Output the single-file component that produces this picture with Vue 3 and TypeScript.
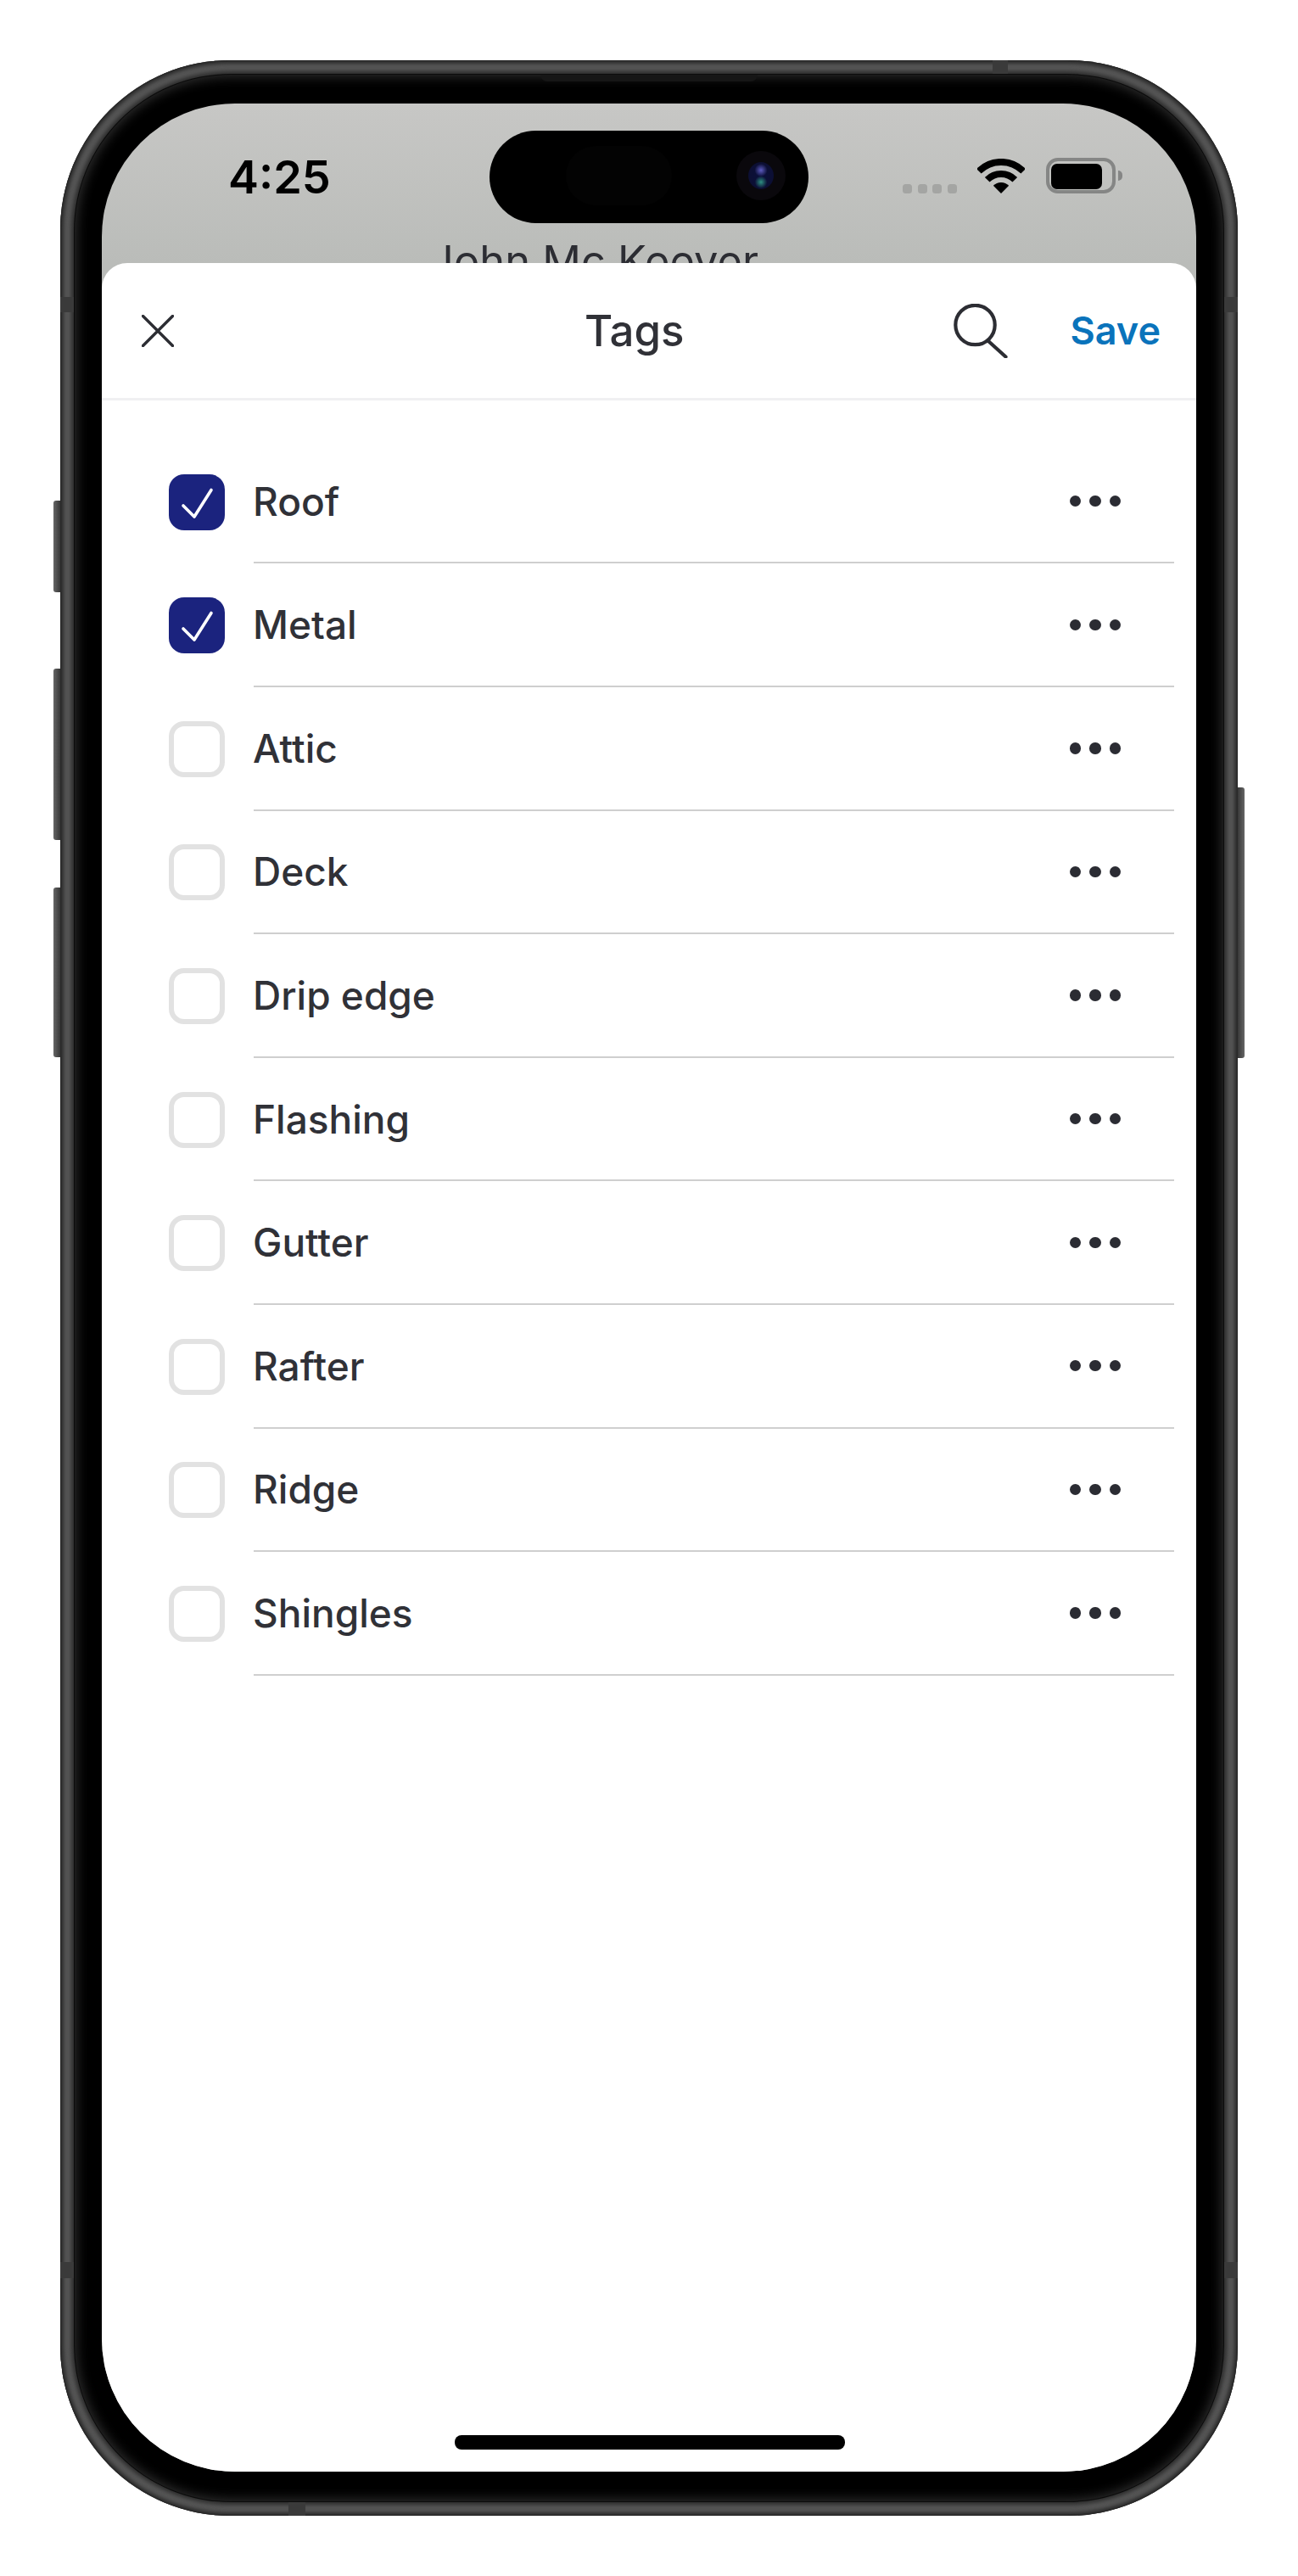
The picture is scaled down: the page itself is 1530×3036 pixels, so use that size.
<script setup lang="ts">
interface Tag { name: string; checked: boolean }
const tags: Tag[] = [
  { name: 'Roof', checked: true },
  { name: 'Metal', checked: true },
  { name: 'Attic', checked: false },
  { name: 'Deck', checked: false },
  { name: 'Drip edge', checked: false },
  { name: 'Flashing', checked: false },
  { name: 'Gutter', checked: false },
  { name: 'Rafter', checked: false },
  { name: 'Ridge', checked: false },
  { name: 'Shingles', checked: false },
]
</script>

<template>
  <div class="page">
    <div class="phone">
      <i class="btn btn-a"></i>
      <i class="btn btn-b"></i>
      <i class="btn btn-c"></i>
      <i class="btn btn-r"></i>
      <div class="bezel">
        <div class="screen">
          <div class="backdrop">
            <div class="status">
              <span class="time">4:25</span>
              <div class="island">
                <i class="sensor"></i>
                <i class="camera"><i class="lens"></i></i>
              </div>
              <div class="signal"><i></i><i></i><i></i><i></i></div>
              <svg class="wifi" width="56" height="41" viewBox="0 0 56 41">
                <path d="M1.8 14.8A37 37 0 0 1 54.2 14.8" fill="none" stroke="#000" stroke-width="8" />
                <path d="M11.7 24.7A23 23 0 0 1 44.3 24.7" fill="none" stroke="#000" stroke-width="8" />
                <path d="M18.8 31.8A13 13 0 0 1 37.2 31.8L28 41Z" fill="#000" />
              </svg>
              <div class="battery"><i></i></div>
              <i class="nub"></i>
            </div>
            <div class="name">John Mc Keever</div>
          </div>

          <div class="sheet">
            <header class="head">
              <svg class="close" width="38" height="38" viewBox="0 0 38 38">
                <path d="M1.5 1.5L36.5 36.5M36.5 1.5L1.5 36.5" stroke="#2c2d33" stroke-width="3.4" stroke-linecap="round" />
              </svg>
              <h1 class="title">Tags</h1>
              <svg class="search" width="64" height="64" viewBox="0 0 64 64">
                <circle cx="25.5" cy="25" r="23.2" fill="none" stroke="#2c2d33" stroke-width="4.2" />
                <path d="M41 44L61.5 62.5" stroke="#2c2d33" stroke-width="4.2" stroke-linecap="round" />
              </svg>
              <span class="save">Save</span>
            </header>

            <ul class="list">
              <li v-for="tag in tags" :key="tag.name" class="row">
                <span class="box" :class="{ on: tag.checked }">
                  <svg v-if="tag.checked" width="66" height="66" viewBox="0 0 66 66">
                    <path d="M17 37L30 50L50 18.5" fill="none" stroke="#fff" stroke-width="3.6" stroke-linecap="round" stroke-linejoin="round" />
                  </svg>
                </span>
                <div class="main">
                  <span class="label">{{ tag.name }}</span>
                  <span class="dots"><i></i><i></i><i></i></span>
                </div>
              </li>
            </ul>

            <div class="home"></div>
          </div>
        </div>
      </div>
      <i class="speaker"></i>
      <i class="band band-top"></i>
      <i class="band band-l1"></i>
      <i class="band band-r1"></i>
      <i class="band band-l2"></i>
      <i class="band band-r2"></i>
      <i class="band band-bot"></i>
    </div>
  </div>
</template>

<style>
html, body { margin: 0; background: #fff; }
</style>

<style scoped>
.page {
  width: 1530px;
  height: 3036px;
  box-sizing: border-box;
  padding: 71px 0 0 71px;
  font-family: Inter, "Liberation Sans", sans-serif;
}
.phone {
  position: relative;
  width: 1388px;
  height: 2894px;
  box-sizing: border-box;
  padding: 17px;
  border-radius: 200px;
  background: #565656;
  box-shadow: inset 0 0 0 1.5px #2a2a2a, inset 0 0 4px 4px #2d2d2d;
}
.bezel {
  height: 100%;
  box-sizing: border-box;
  padding: 34px 32px 35px;
  border-radius: 184px;
  background: #000;
  box-shadow: 0 0 0 1px #0c0c0c, 0 0 5px 4px #2c2c2c, inset 0 0 14px 2px #303030;
}
.screen {
  height: 100%;
  border-radius: 157px;
  overflow: hidden;
  display: flex;
  flex-direction: column;
  background: linear-gradient(#c7c7c5, #babcb9 188px);
}
.btn {
  position: absolute;
  width: 8px;
  left: -8px;
  border-radius: 3px 0 0 3px;
  background: linear-gradient(90deg, #666, #383838);
}
.btn-a { top: 519px; height: 108px; }
.btn-b { top: 717px; height: 202px; }
.btn-c { top: 975px; height: 200px; }
.btn-r { top: 857px; height: 319px; left: auto; right: -8px; border-radius: 0 3px 3px 0; background: linear-gradient(270deg, #666, #383838); }
.speaker {
  position: absolute;
  left: 566px;
  top: 17px;
  width: 256px;
  height: 8px;
  background: #161616;
  border-radius: 0 0 8px 8px;
}
.band { position: absolute; background: #3a3a3a; }
.band-top { left: 1099px; top: 0; width: 18px; height: 16px; }
.band-l1 { left: 0; top: 279px; width: 16px; height: 18px; }
.band-r1 { right: 0; top: 279px; width: 16px; height: 18px; }
.band-l2 { left: 0; top: 2595px; width: 16px; height: 19px; }
.band-r2 { right: 0; top: 2595px; width: 16px; height: 19px; }
.band-bot { left: 269px; bottom: 0; width: 20px; height: 16px; }

.backdrop {
  height: 188px;
  flex: none;
  overflow: hidden;
}
.status {
  height: 156px;
  display: flex;
  align-items: flex-start;
  padding-left: 149px;
}
.status i { display: block; }
.time {
  width: 308px;
  margin-top: 54px;
  font-size: 54px;
  line-height: 66px;
  font-weight: 600;
  color: #000;
}
.island {
  width: 376px;
  height: 109px;
  margin-top: 32px;
  flex: none;
  border-radius: 54.5px;
  background: #000;
  display: flex;
  align-items: center;
  justify-content: space-between;
  padding: 0 27px 3px 90px;
  box-sizing: border-box;
}
.sensor {
  width: 125px;
  height: 70px;
  border-radius: 35px;
  background: #030303;
}
.camera {
  width: 58px;
  height: 58px;
  border-radius: 50%;
  background: #0a080c;
  display: flex !important;
  align-items: center;
  justify-content: center;
}
.lens {
  width: 30px;
  height: 32px;
  border-radius: 50%;
  background:
    radial-gradient(circle at 50% 30%, #5d5bc0 0, transparent 28%),
    radial-gradient(circle at 50% 74%, #2e8f80 0, transparent 26%),
    radial-gradient(circle, #0a0f3a 0, #0c0f34 65%, #0a0a1c 100%);
}
.signal {
  display: flex;
  gap: 6.6px;
  margin: 94.7px 0 0 111px;
}
.signal i {
  width: 11px;
  height: 11px;
  border-radius: 3.5px;
  background: #a4a5a3;
}
.wifi { flex: none; margin: 65px 0 0 24px; }
.battery {
  width: 82px;
  height: 42px;
  flex: none;
  box-sizing: border-box;
  margin: 64px 0 0 25px;
  padding: 2.5px;
  border: 4px solid #858685;
  border-radius: 14px;
}
.battery i {
  width: 60px;
  height: 30px;
  background: #000;
  border-radius: 7px;
}
.nub {
  width: 5px;
  height: 12px;
  margin: 78.7px 0 0 3px;
  background: #858685;
  border-radius: 0 6px 6px 0;
}
.name {
  padding-left: 386px;
  font-size: 50.6px;
  line-height: 60px;
  color: #2c2d33;
  white-space: nowrap;
}

.sheet {
  flex: 1;
  background: #fff;
  border-radius: 30px 30px 0 0;
  display: flex;
  flex-direction: column;
}
.head {
  height: 162px;
  flex: none;
  box-sizing: border-box;
  display: flex;
  align-items: center;
  padding: 0 42px 0 47px;
  border-bottom: 3px solid #f0f0f2;
}
.close { flex: none; }
.title {
  flex: 1;
  margin: 0;
  padding-left: 484px;
  font-size: 51px;
  line-height: 60px;
  font-weight: 450;
  color: #303137;
}
.search { flex: none; }
.save {
  margin-left: 73px;
  font-size: 45px;
  line-height: 60px;
  font-weight: 600;
  color: #0a73bb;
}
.list {
  flex: 1;
  margin: 0;
  padding: 46.9px 0 0;
  list-style: none;
}
.row {
  height: 145.6px;
  display: flex;
  align-items: center;
  padding-left: 79px;
}
.box {
  width: 66px;
  height: 66px;
  flex: none;
  box-sizing: border-box;
  border: 6px solid #e2e2e2;
  border-radius: 18px;
}
.box.on {
  border: 0;
  background: #1b237e;
}
.box svg { display: block; }
.main {
  flex: 1;
  align-self: stretch;
  display: flex;
  align-items: center;
  justify-content: space-between;
  margin: 0 26px 0 34px;
  padding-right: 63px;
  border-bottom: 2px solid #cfcfcf;
}
.label {
  margin-left: -1px;
  font-size: 46px;
  line-height: 56px;
  font-weight: 450;
  color: #303137;
}
.dots { display: flex; gap: 10px; }
.dots i {
  display: block;
  width: 13.3px;
  height: 13.3px;
  border-radius: 50%;
  background: #2b2c33;
}
.home {
  flex: none;
  width: 460px;
  height: 17px;
  margin: 0 0 26px 415.5px;
  border-radius: 8px;
  background: #000;
}
</style>
